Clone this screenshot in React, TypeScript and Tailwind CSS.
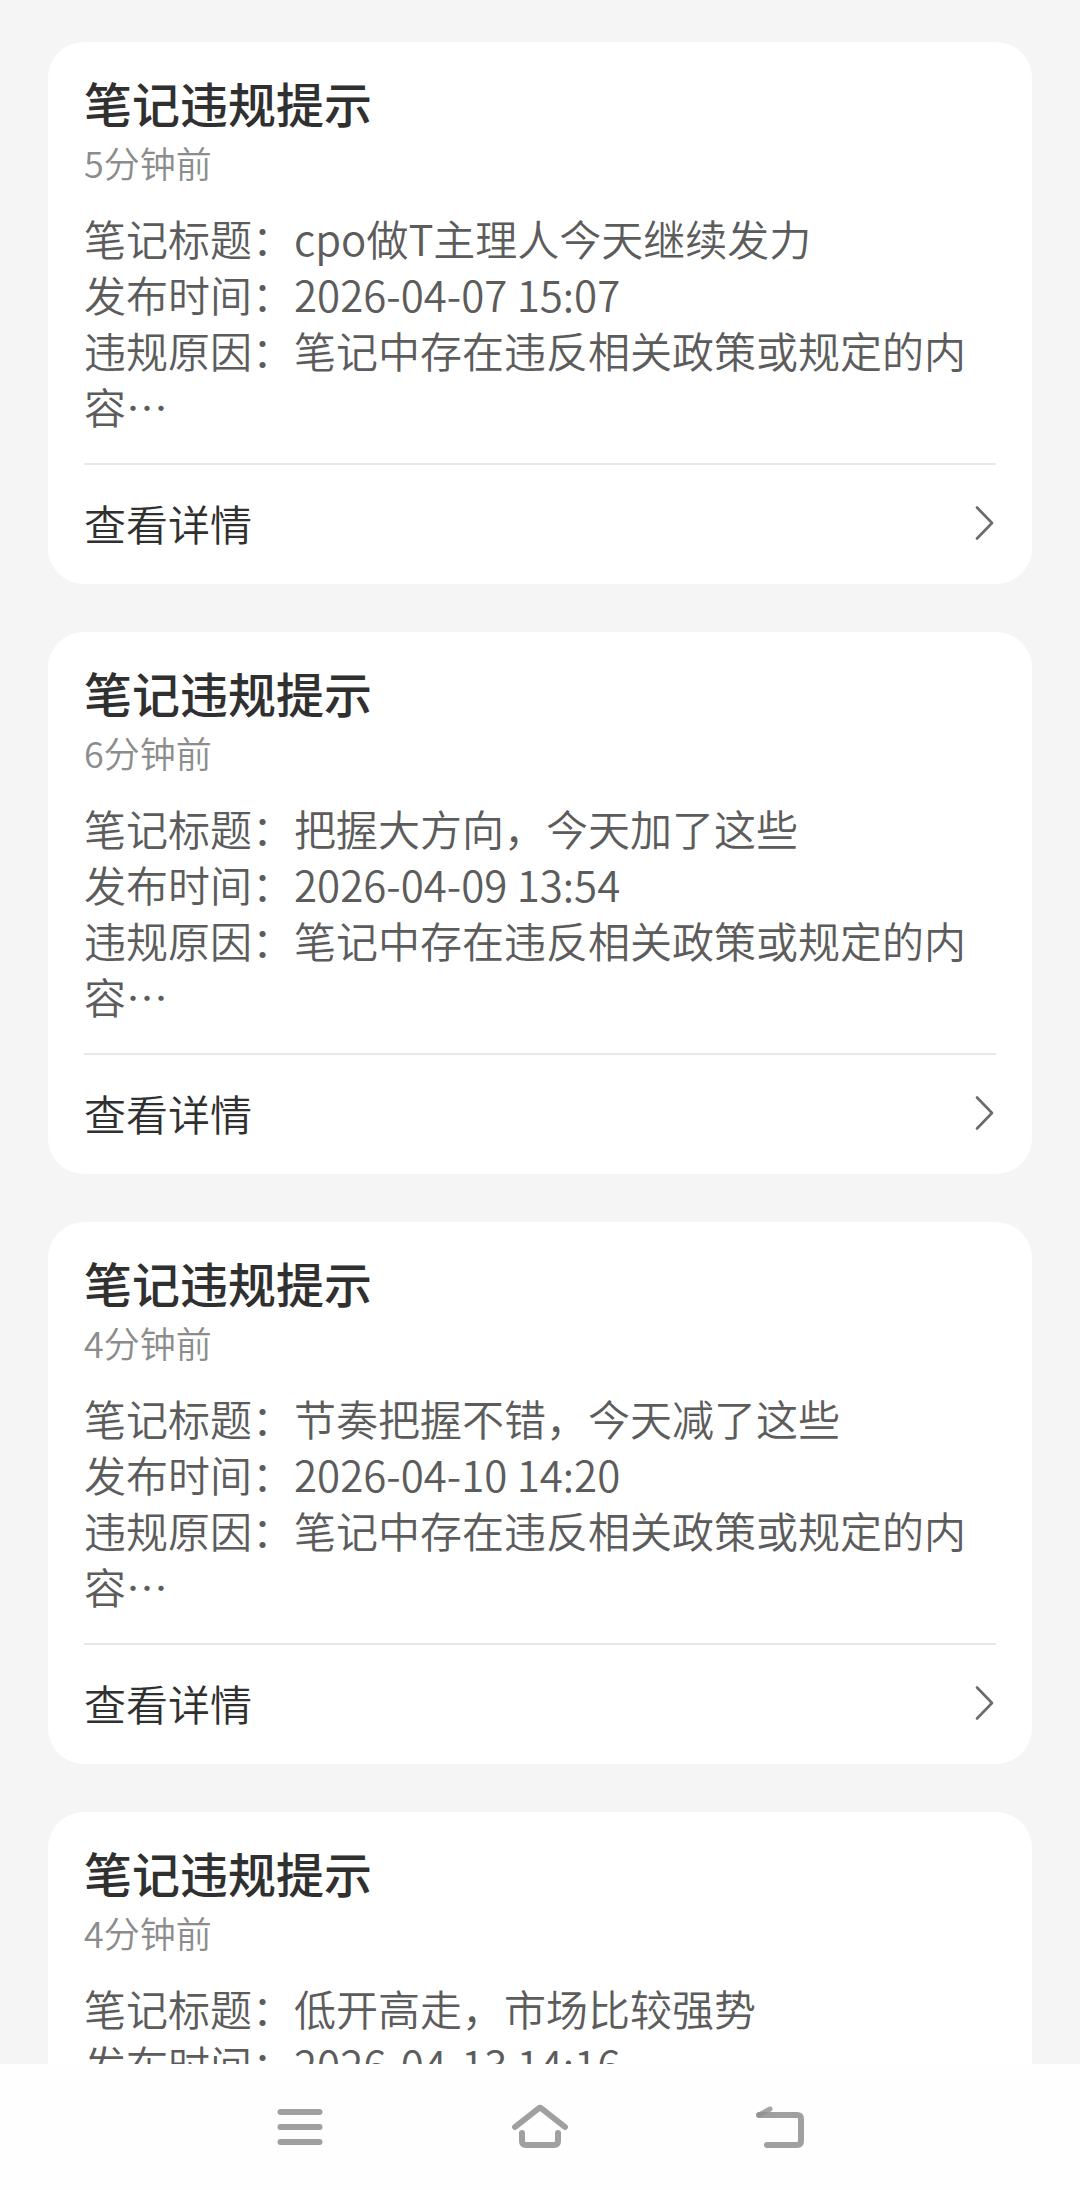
import React from 'react';

interface Notice {
  id: number;
  title: string;
  timeAgo: string;
  noteTitle: string;
  publishedAt: string;
  reason: string;
}

const REASON = '笔记中存在违反相关政策或规定的内容…';

const notices: Notice[] = [
  { id: 1, title: '笔记违规提示', timeAgo: '5分钟前', noteTitle: 'cpo做T主理人今天继续发力', publishedAt: '2026-04-07 15:07', reason: REASON },
  { id: 2, title: '笔记违规提示', timeAgo: '6分钟前', noteTitle: '把握大方向，今天加了这些', publishedAt: '2026-04-09 13:54', reason: REASON },
  { id: 3, title: '笔记违规提示', timeAgo: '4分钟前', noteTitle: '节奏把握不错，今天减了这些', publishedAt: '2026-04-10 14:20', reason: REASON },
  { id: 4, title: '笔记违规提示', timeAgo: '4分钟前', noteTitle: '低开高走，市场比较强势', publishedAt: '2026-04-13 14:16', reason: REASON },
];

const ChevronIcon: React.FC = () => (
  <svg className="w-6 h-9" viewBox="0 0 24 36" fill="none" stroke="#6b6b6b" strokeWidth="2.6" strokeLinecap="round" strokeLinejoin="round" aria-hidden="true">
    <path d="M5 2.5 20 18 5 33.5" />
  </svg>
);

const NoticeCard: React.FC<{ notice: Notice }> = ({ notice }) => {
  return (
    <article className="shrink-0 rounded-[36px] bg-white px-9 pt-[30px]">
      <h2 className="text-[48px] leading-[60px] font-medium text-[#303030]">{notice.title}</h2>
      <p className="mt-1 text-[36px] leading-[52px] text-[#8c8c8c] font-[350]">{notice.timeAgo}</p>

      <div className="mt-[22px] pb-[29px] border-b-2 border-[#e8e8e8] text-[42px] leading-[56px] text-[#5c5c5c] font-[350]">
        <p>笔记标题：{notice.noteTitle}</p>
        <p>发布时间：{notice.publishedAt}</p>
        <p>违规原因：{notice.reason}</p>
      </div>

      <a href="#detail" className="flex items-center justify-between h-[119px] pb-1 text-[42px] leading-[56px] text-[#303030] font-[350]">
        <span>查看详情</span>
        <ChevronIcon />
      </a>
    </article>
  );
};

const NavButton: React.FC<{ label: string; children: React.ReactNode }> = ({ label, children }) => (
  <button type="button" aria-label={label} className="flex items-center justify-center">
    <svg className="w-[60px] h-[60px]" viewBox="0 0 60 60" fill="none" stroke="#a0a0a0" strokeWidth="6" strokeLinecap="round" strokeLinejoin="round">
      {children}
    </svg>
  </button>
);

const BottomNav: React.FC = () => (
  <nav className="shrink-0 grid grid-cols-3 h-[126px] px-[16.6667%] bg-[#fefefe]">
    <NavButton label="最近任务">
      <path d="M10.5 15h39M10.5 30h39M10.5 45h39" />
    </NavButton>
    <NavButton label="主屏幕">
      <path d="M5 30 28.5 11.5q1.5-1.2 3 0L55 30" />
      <path d="M12 36v8q0 4 4 4h28q4 0 4-4v-8" />
    </NavButton>
    <NavButton label="返回">
      <path d="M9 18h38q4 0 4 4v22q0 4-4 4H17" />
      <path d="M9 18 20 12" stroke="#8f8f8f" strokeOpacity="0.8" strokeWidth="5" />
    </NavButton>
  </nav>
);

const App: React.FC = () => {
  return (
    <div lang="zh-CN" className="flex flex-col h-screen bg-[#f5f5f5] font-['Noto_Sans_CJK_SC',sans-serif]">
      <main className="flex-1 min-h-0 flex flex-col gap-12 px-12 pt-[42px] overflow-y-auto [scrollbar-width:none]">
        {notices.map((notice) => (
          <NoticeCard key={notice.id} notice={notice} />
        ))}
      </main>
      <BottomNav />
    </div>
  );
};

export default App;
